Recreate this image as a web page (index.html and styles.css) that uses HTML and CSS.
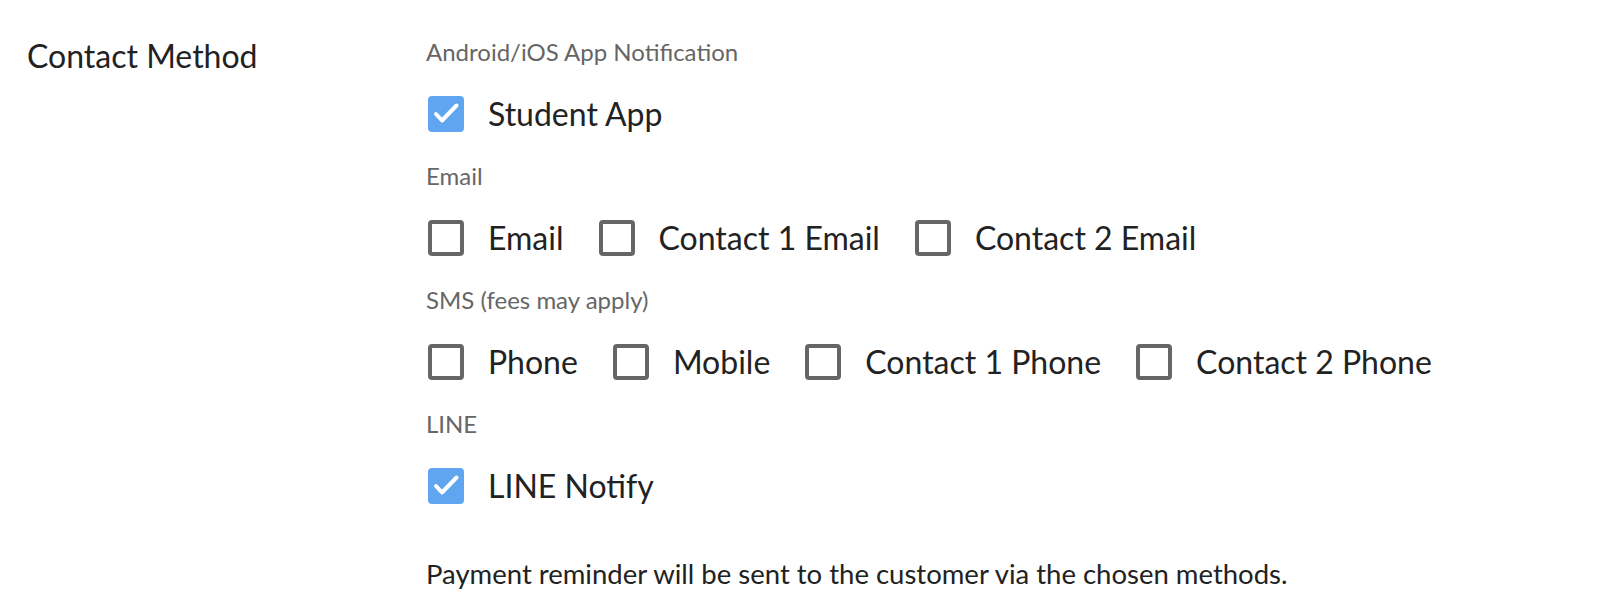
FILE: index.html
```html
<!DOCTYPE html>
<html lang="en">

<head>
    <meta charset="UTF-8">
    <meta name="viewport" content="width=device-width, initial-scale=1.0">
    <title>Contact Method</title>
    <link rel="stylesheet" href="styles.css">
</head>

<body>
    <div class="field">
        <div class="field-label">Contact Method</div>

        <div class="field-body">
            <div class="group-title">Android/iOS App Notification</div>
            <div class="options">
                <label class="option">
                    <span class="box checked">
                        <svg viewBox="0 0 36 36"><path d="M8 18l6 6.5 14.5-15" /></svg>
                    </span>
                    Student App
                </label>
            </div>

            <div class="group-title">Email</div>
            <div class="options">
                <label class="option"><span class="box"></span>Email</label>
                <label class="option"><span class="box"></span>Contact 1 Email</label>
                <label class="option"><span class="box"></span>Contact 2 Email</label>
            </div>

            <div class="group-title">SMS (fees may apply)</div>
            <div class="options">
                <label class="option"><span class="box"></span>Phone</label>
                <label class="option"><span class="box"></span>Mobile</label>
                <label class="option"><span class="box"></span>Contact 1 Phone</label>
                <label class="option"><span class="box"></span>Contact 2 Phone</label>
            </div>

            <div class="group-title">LINE</div>
            <div class="options">
                <label class="option">
                    <span class="box checked">
                        <svg viewBox="0 0 36 36"><path d="M8 18l6 6.5 14.5-15" /></svg>
                    </span>
                    LINE Notify
                </label>
            </div>

            <p class="hint">Payment reminder will be sent to the customer via the chosen methods.</p>
        </div>
    </div>
</body>

</html>
```

FILE: styles.css
```css
body {
    margin: 0;
    font-family: Lato, "Open Sans", sans-serif;
    color: #222;
    background: #fff;
}

.field {
    display: flex;
    padding: 37px 0 0 27px;
}

.field-label {
    width: 399px;
    flex: none;
    font-size: 32px;
    line-height: 40px;
    margin-top: -1px;
}

.field-body {
    display: flex;
    flex-direction: column;
}

.group-title {
    font-size: 24px;
    line-height: 30px;
    color: #666;
    margin-bottom: 29px;
}

.options {
    display: flex;
    gap: 35px;
    margin: 0 0 29px 2px;
}

.option {
    display: flex;
    align-items: center;
    gap: 24px;
    font-size: 32px;
    line-height: 36px;
}

.box {
    width: 36px;
    height: 36px;
    box-sizing: border-box;
    border: 4px solid #666;
    border-radius: 4px;
    flex: none;
}

.box.checked {
    border: none;
    background: #60a5f0;
}

.box svg {
    display: block;
    width: 36px;
    height: 36px;
    fill: none;
    stroke: #fff;
    stroke-width: 4;
    stroke-linecap: round;
    stroke-linejoin: round;
}

.hint {
    margin: 26px 0 0;
    font-size: 27.5px;
    line-height: 30px;
}
```
